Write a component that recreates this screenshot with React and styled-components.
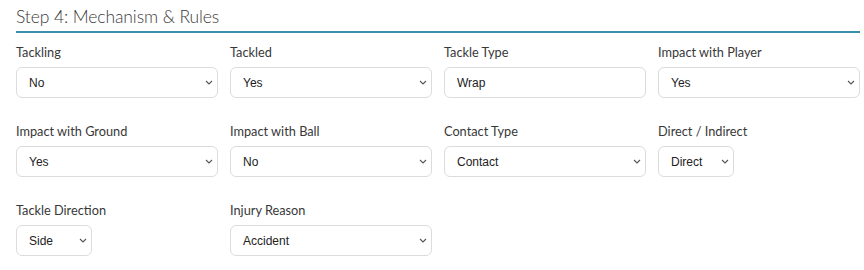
import React from "react";
import styled, { createGlobalStyle } from "styled-components";

const Global = createGlobalStyle`
  html, body { margin: 0; padding: 0; background: #fff; }
  body { font-family: "Lato", "Open Sans", sans-serif; }
`;

const Page = styled.div`
  padding: 0 4px 0 16px;
  width: 864px;
  box-sizing: border-box;
`;

const Heading = styled.h2`
  margin: 0;
  padding-top: 4px;
  font-family: "Lato", sans-serif;
  font-weight: 300;
  font-size: 17.5px;
  line-height: 25px;
  letter-spacing: -0.1px;
  color: #3a3a3a;
  border-bottom: 2px solid #3a8fac;
  padding-bottom: 2px;
`;

const Grid = styled.div`
  display: grid;
  grid-template-columns: repeat(4, 202px);
  column-gap: 12px;
  row-gap: 24px;
  margin-top: 10px;
`;

const Field = styled.div`
  display: flex;
  flex-direction: column;
  align-items: flex-start;
`;

const Label = styled.label`
  font-family: "Lato", sans-serif;
  font-size: 12.75px;
  line-height: 18px;
  color: #383838;
  margin-bottom: 6px;
`;

const SelectWrap = styled.div`
  position: relative;
  width: ${(p) => (p.$narrow ? "76px" : "202px")};
`;

const controlCss = `
  box-sizing: border-box;
  width: 100%;
  height: 31px;
  border: 1px solid #dcdcdc;
  border-radius: 6px;
  background: #fff;
  font-family: "Liberation Sans", Arial, sans-serif;
  font-size: 12px;
  color: #222;
  padding: 0 24px 0 12px;
  outline: none;
  margin: 0;
`;

const Select = styled.select`
  ${controlCss}
  appearance: none;
  -webkit-appearance: none;
`;

const Input = styled.input`
  ${controlCss}
  padding-right: 12px;
`;

const Chevron = styled.svg`
  position: absolute;
  right: 5px;
  top: 13px;
  width: 8px;
  height: 5px;
  pointer-events: none;
`;

function Dropdown({ value, narrow }) {
  return (
    <SelectWrap $narrow={narrow}>
      <Select defaultValue={value}>
        <option>{value}</option>
      </Select>
      <Chevron viewBox="0 0 8 5">
        <path d="M1 1l3 3 3-3" fill="none" stroke="#555" strokeWidth="1.1" />
      </Chevron>
    </SelectWrap>
  );
}

const fields = [
  { label: "Tackling", value: "No" },
  { label: "Tackled", value: "Yes" },
  { label: "Tackle Type", value: "Wrap", input: true },
  { label: "Impact with Player", value: "Yes" },
  { label: "Impact with Ground", value: "Yes" },
  { label: "Impact with Ball", value: "No" },
  { label: "Contact Type", value: "Contact" },
  { label: "Direct / Indirect", value: "Direct", narrow: true },
  { label: "Tackle Direction", value: "Side", narrow: true },
  { label: "Injury Reason", value: "Accident" },
];

export default function App() {
  return (
    <Page>
      <Global />
      <Heading>Step 4: Mechanism &amp; Rules</Heading>
      <Grid>
        {fields.map((f) => (
          <Field key={f.label}>
            <Label>{f.label}</Label>
            {f.input ? (
              <SelectWrap>
                <Input defaultValue={f.value} />
              </SelectWrap>
            ) : (
              <Dropdown value={f.value} narrow={f.narrow} />
            )}
          </Field>
        ))}
      </Grid>
    </Page>
  );
}
